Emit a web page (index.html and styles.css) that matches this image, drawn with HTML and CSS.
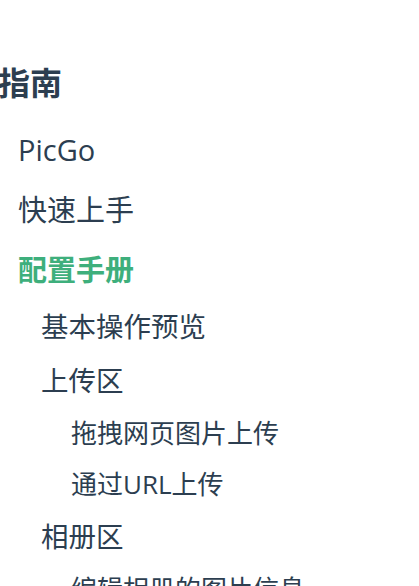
FILE: index.html
```html
<!DOCTYPE html>
<html lang="zh-CN">
<head>
<meta charset="utf-8">
<link rel="stylesheet" href="styles.css">
</head>
<body>
<aside class="sidebar">
  <p class="sidebar-heading">指南</p>
  <ul class="links level1">
    <li><a class="link">PicGo</a></li>
    <li><a class="link">快速上手</a></li>
    <li>
      <a class="link active">配置手册</a>
      <ul class="links level2">
        <li><a class="link">基本操作预览</a></li>
        <li>
          <a class="link">上传区</a>
          <ul class="links level3">
            <li><a class="link">拖拽网页图片上传</a></li>
            <li><a class="link">通过URL上传</a></li>
          </ul>
        </li>
        <li>
          <a class="link">相册区</a>
          <ul class="links level3">
            <li><a class="link">编辑相册的图片信息</a></li>
          </ul>
        </li>
      </ul>
    </li>
  </ul>
</aside>
</body>
</html>
```
FILE: styles.css
```css
html, body {
  margin: 0;
  padding: 0;
  background: #ffffff;
  overflow: hidden;
}

.sidebar {
  font-family: "Open Sans", "Noto Sans CJK SC", sans-serif;
  color: #2c3e50;
  padding-top: 61px;
  width: 419px;
  height: 586px;
  overflow: hidden;
}

.sidebar-heading {
  margin: 0 0 0 -2px;
  font-size: 32px;
  line-height: 44px;
  font-weight: bold;
  color: #2c3e50;
}

.links {
  list-style: none;
  margin: 0;
  padding: 0;
}

.link {
  display: block;
  white-space: nowrap;
  color: #2c3e50;
}

.level1 {
  margin-top: 15px;
  font-size: 29px;
  padding-left: 18px;
}

.level1 > li > .link {
  line-height: 60px;
}

.level2 {
  font-size: 27.5px;
  padding-left: 23px;
}

.level2 > li > .link {
  line-height: 54px;
}

.level3 {
  font-size: 26px;
  padding-left: 30px;
}

.level3 > li > .link {
  line-height: 51px;
}

.link.active {
  color: #3eaf7c;
  font-weight: bold;
}
```
